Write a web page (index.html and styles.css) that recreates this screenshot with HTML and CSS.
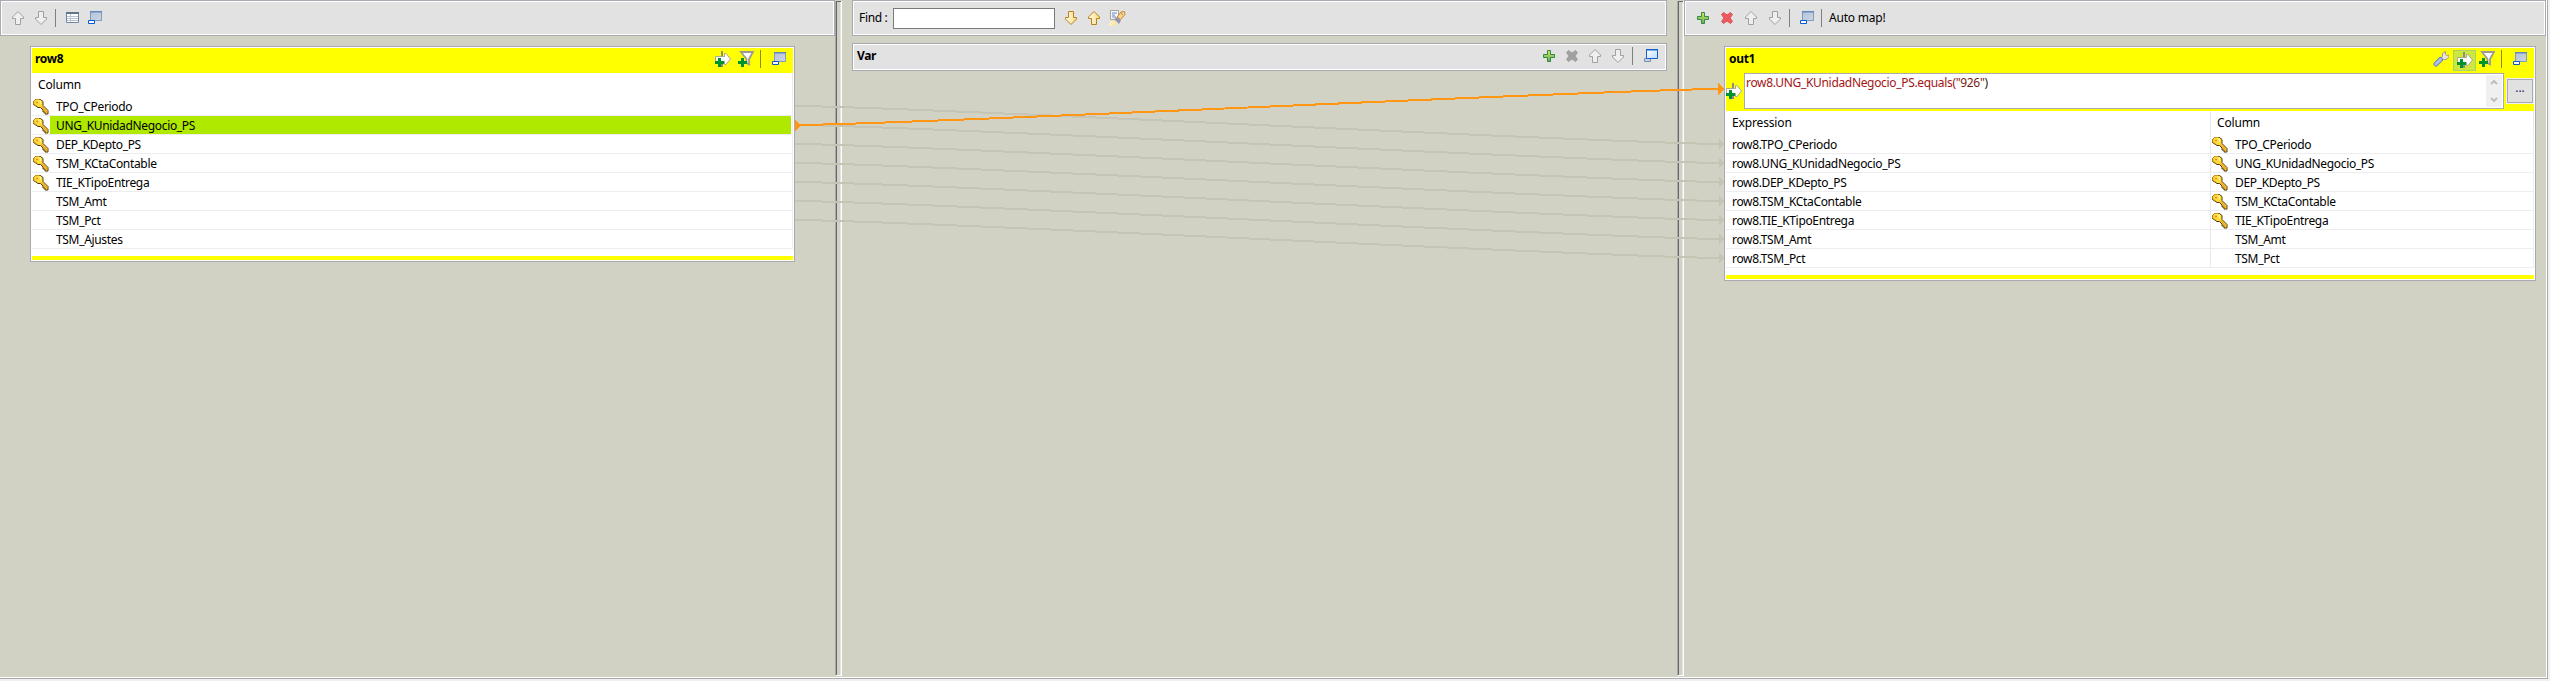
FILE: index.html
```html
<!DOCTYPE html>
<html lang="es">
<head>
<meta charset="utf-8">
<title>Map editor</title>
<link rel="stylesheet" href="styles.css">
</head>
<body>
<svg class="defs" width="0" height="0" aria-hidden="true">
  <defs>
    <linearGradient id="gGold" x1="0" y1="0" x2="1" y2="0"><stop offset="0" stop-color="#fffbe8"/><stop offset="1" stop-color="#f8dc80"/></linearGradient>
    <linearGradient id="gGreen" x1="0" y1="0" x2="0" y2="1"><stop offset="0" stop-color="#d3ea5b"/><stop offset="1" stop-color="#5fae55"/></linearGradient>
    <linearGradient id="gPane" x1="0" y1="0" x2="1" y2="1"><stop offset="0" stop-color="#b0c4de"/><stop offset="1" stop-color="#d0d5dc"/></linearGradient>
    <linearGradient id="gBlue" x1="0" y1="0" x2="1" y2="1"><stop offset="0" stop-color="#ffffff"/><stop offset="1" stop-color="#b9dcff"/></linearGradient>
    <symbol id="up" viewBox="0 0 16 16"><path d="M8 1.500 13.500 7v1.500h-3v6h-5v-6h-3V7z" stroke-linejoin="round"/></symbol>
    <symbol id="down" viewBox="0 0 16 16"><path d="M8 14.500 13.500 9V7.500h-3v-6h-5v6h-3V9z" stroke-linejoin="round"/></symbol>
    <symbol id="grid" viewBox="0 0 16 16"><path d="M2.500 2.500h12v10h-12z" fill="#fff" stroke="#7187a0"/><path d="M2 2h13v2H2z" fill="#5f7389"/><path d="M3 6.500h11M3 8.500h11M3 10.500h11M6.500 4v8" stroke="#b9c4d2" fill="none"/></symbol>
    <symbol id="minwin" viewBox="0 0 16 16"><path d="M3.500 1.500h11v9h-11z" fill="url(#gPane)" stroke="#7f9cc0"/><path d="M3 1h12v1.500H3z" fill="#6488bb"/><path d="M1.500 10.500h6v3h-6z" fill="#fff" stroke="#0b5bd0"/></symbol>
    <symbol id="maxwin" viewBox="0 0 16 16"><path d="M1.500 10.500h6v3h-6z" fill="#c6d2e2" stroke="#7892b5"/><path d="M3.500 1.500h11v9h-11z" fill="url(#gBlue)" stroke="#1461c8"/><path d="M3 1h12v1.500H3z" fill="#1461c8"/></symbol>
    <symbol id="plus" viewBox="0 0 16 16"><path d="M6.500 2.500h3v4h4v3h-4v4h-3v-4h-4v-3h4z" fill="url(#gGreen)" stroke="#35874c"/></symbol>
    <symbol id="cross" viewBox="0 0 16 16"><path d="M2.500 4.500 4.500 2.500 8 5l3.500-2.500 2 2L11 8l2.500 3.500-2 2L8 11l-3.500 2.500-2-2L5 8z" stroke-linejoin="round"/></symbol>
    <symbol id="exprfilter" viewBox="0 0 16 16"><path d="M7 0v16" stroke="#8f8f78" stroke-width="2"/><path d="M.5 5.500h9v-3h1.500L15.500 8 11 13.500H9.500v-3h-9z" fill="#fff" stroke="#aaa88d"/><path d="M3 7h3v3h3v3H6v3H3v-3H0v-3h3z" fill="#00942f"/></symbol>
    <symbol id="funnel" viewBox="0 0 16 16"><path d="M3 1h12L11 8v5.500L8.500 12V8z" fill="#fff" stroke="#9d9b91" stroke-width="1.800"/><path d="M3 7h3v3h3v3H6v3H3v-3H0v-3h3z" fill="#00942f"/></symbol>
    <symbol id="key" viewBox="0 0 16 16"><path d="M2.500.5h5l2.500 2v4l5 5v3.500h-3v-2h-2v-2L7.500 8.500H5L.5 5.500v-3z" fill="#ffdc3c" stroke="#4f3908" stroke-linejoin="round"/><path d="M4 7.200.8 5V2.500L2.500.5h4" fill="none" stroke="#d89a18"/><path d="M8.500 7.500 14 13" stroke="#f2a428" stroke-width="1.500"/><path d="M3 3.500h2M4 2.500v2" stroke="#e88b20"/><path d="M5.500 2h2v3" fill="none" stroke="#fff6a0"/></symbol>
    <symbol id="brush" viewBox="0 0 18 16"><path d="M2.500.5h8v9h-8z" fill="#f6f9ff" stroke="#a6a38e"/><path d="M4 3h5M4 5h3M4 7h4" stroke="#6383c4"/><path d="m9 7 4-5 3.500-.5.5 3-4.500 5z" fill="#f6d48c" stroke="#c8862c"/><path d="m13.500 3.500 1 1" stroke="#555"/><path d="m6 9 3-2 4 3.500-2 3.500z" fill="#9893a8"/><path d="m5 10 4 4-3 1.500H1z" fill="#ffe88c"/><path d="m4 11-3 4M6 12l-3 3.500" stroke="#fffce6"/></symbol>
    <symbol id="wrench" viewBox="0 0 16 16"><path d="M7 7.500 9.500 5.500V2.500L12.500.5v3l1 1 2.500-.5v2L13 8.500h-2.500l-2 2z" fill="#e9e7dd" stroke="#a29d84"/><path d="M3 13 7.500 8.500" stroke="#7188bd" stroke-width="5" stroke-linecap="round"/><path d="M3 13 7.500 8.500" stroke="#a9bfe8" stroke-width="3" stroke-linecap="round"/></symbol>
    <symbol id="arrowin" viewBox="0 0 6 12"><path d="M0 0v12l6-6z"/></symbol>
  </defs>
</svg>

<main class="editor">
  <section class="panel inputs">
    <div class="bar">
      <svg class="ic gray"><use href="#up"/></svg>
      <svg class="ic gray g7"><use href="#down"/></svg>
      <i class="sep g6"></i>
      <svg class="ic g8"><use href="#grid"/></svg>
      <svg class="ic g7"><use href="#minwin"/></svg>
    </div>
    <article class="table">
      <header class="title">
        <h2>row8</h2>
        <svg class="ic"><use href="#exprfilter"/></svg>
        <svg class="ic g7"><use href="#funnel"/></svg>
        <i class="sep olive g6"></i>
        <svg class="ic g10"><use href="#minwin"/></svg>
      </header>
      <div class="head"><span class="name">Column</span></div>
      <div class="rows">
        <div class="row"><svg class="key"><use href="#key"/></svg><span class="col">TPO_CPeriodo</span></div>
        <div class="row selected"><svg class="key"><use href="#key"/></svg><span class="col">UNG_KUnidadNegocio_PS</span></div>
        <div class="row"><svg class="key"><use href="#key"/></svg><span class="col">DEP_KDepto_PS</span></div>
        <div class="row"><svg class="key"><use href="#key"/></svg><span class="col">TSM_KCtaContable</span></div>
        <div class="row"><svg class="key"><use href="#key"/></svg><span class="col">TIE_KTipoEntrega</span></div>
        <div class="row"><svg class="key"></svg><span class="col">TSM_Amt</span></div>
        <div class="row"><svg class="key"></svg><span class="col">TSM_Pct</span></div>
        <div class="row"><svg class="key"></svg><span class="col">TSM_Ajustes</span></div>
      </div>
      <div class="foot"></div>
    </article>
  </section>

  <div class="splitter"></div>

  <section class="panel vars">
    <div class="bar find">
      <label class="label" for="find">Find :</label>
      <input id="find" class="field" type="text">
      <svg class="ic gold g8"><use href="#down"/></svg>
      <svg class="ic gold g7"><use href="#up"/></svg>
      <svg class="ic wide g6"><use href="#brush"/></svg>
    </div>
    <div class="bar var">
      <h2>Var</h2>
      <svg class="ic"><use href="#plus"/></svg>
      <svg class="ic off g7"><use href="#cross"/></svg>
      <svg class="ic gray g7"><use href="#up"/></svg>
      <svg class="ic gray g7"><use href="#down"/></svg>
      <i class="sep g6"></i>
      <svg class="ic g10"><use href="#maxwin"/></svg>
    </div>
  </section>

  <div class="splitter"></div>

  <section class="panel outputs">
    <div class="bar">
      <svg class="ic"><use href="#plus"/></svg>
      <svg class="ic red g8"><use href="#cross"/></svg>
      <svg class="ic gray g8"><use href="#up"/></svg>
      <svg class="ic gray g8"><use href="#down"/></svg>
      <i class="sep g6"></i>
      <svg class="ic g9"><use href="#minwin"/></svg>
      <i class="sep g6"></i>
      <span class="label automap">Auto map!</span>
    </div>
    <article class="table">
      <header class="title">
        <h2>out1</h2>
        <svg class="ic"><use href="#wrench"/></svg>
        <span class="toggle"><svg class="ic"><use href="#exprfilter"/></svg></span>
        <svg class="ic g3"><use href="#funnel"/></svg>
        <i class="sep olive g6"></i>
        <svg class="ic g10"><use href="#minwin"/></svg>
      </header>
      <div class="filter">
        <svg class="ic mark"><use href="#exprfilter"/></svg>
        <div class="expression">
          <span>row8.UNG_KUnidadNegocio_PS.equals(<b class="str">"926"</b><b class="paren">)</b></span>
          <div class="scroll">
            <svg width="8" height="5" viewBox="0 0 8 5"><path d="m1 4 3-3 3 3"/></svg>
            <svg width="8" height="5" viewBox="0 0 8 5"><path d="m1 1 3 3 3-3"/></svg>
          </div>
        </div>
        <button class="more" type="button">...</button>
      </div>
      <div class="head"><span class="expr">Expression</span><span class="name">Column</span></div>
      <div class="rows">
        <div class="row"><span class="expr">row8.TPO_CPeriodo</span><svg class="key"><use href="#key"/></svg><span class="col">TPO_CPeriodo</span></div>
        <div class="row"><span class="expr">row8.UNG_KUnidadNegocio_PS</span><svg class="key"><use href="#key"/></svg><span class="col">UNG_KUnidadNegocio_PS</span></div>
        <div class="row"><span class="expr">row8.DEP_KDepto_PS</span><svg class="key"><use href="#key"/></svg><span class="col">DEP_KDepto_PS</span></div>
        <div class="row"><span class="expr">row8.TSM_KCtaContable</span><svg class="key"><use href="#key"/></svg><span class="col">TSM_KCtaContable</span></div>
        <div class="row"><span class="expr">row8.TIE_KTipoEntrega</span><svg class="key"><use href="#key"/></svg><span class="col">TIE_KTipoEntrega</span></div>
        <div class="row"><span class="expr">row8.TSM_Amt</span><svg class="key"></svg><span class="col">TSM_Amt</span></div>
        <div class="row"><span class="expr">row8.TSM_Pct</span><svg class="key"></svg><span class="col">TSM_Pct</span></div>
      </div>
      <div class="foot"></div>
    </article>
  </section>

  <svg class="links" width="2547" height="300" viewBox="0 0 2547 300">
    <g class="link">
      <path d="M795 106C905 106 1614 144 1724 144"/>
      <path d="M795 125C905 125 1614 163 1724 163"/>
      <path d="M795 144C905 144 1614 182 1724 182"/>
      <path d="M795 163C905 163 1614 201 1724 201"/>
      <path d="M795 182C905 182 1614 220 1724 220"/>
      <path d="M795 201C905 201 1614 239 1724 239"/>
      <path d="M795 220C905 220 1614 258 1724 258"/>
    </g>
    <g class="tips">
      <use href="#arrowin" x="1719" y="138.500" width="5" height="11"/>
      <use href="#arrowin" x="1719" y="157.500" width="5" height="11"/>
      <use href="#arrowin" x="1719" y="176.500" width="5" height="11"/>
      <use href="#arrowin" x="1719" y="195.500" width="5" height="11"/>
      <use href="#arrowin" x="1719" y="214.500" width="5" height="11"/>
      <use href="#arrowin" x="1719" y="233.500" width="5" height="11"/>
      <use href="#arrowin" x="1719" y="252.500" width="5" height="11"/>
    </g>
    <g class="active">
      <path d="M795 125C905 125 1614 89 1720 89"/>
      <path class="tip" d="M795 120v11l5.500-5.500zM1718 83v12l6-6z"/>
    </g>
  </svg>
</main>
</body>
</html>
```

FILE: styles.css
```css
* { box-sizing: border-box; }

body {
  margin: 0;
  background: #f0f0f0;
  color: #000;
  font: 12px/16px "Noto Sans", "Open Sans", sans-serif;
  letter-spacing: -0.33px;
}

h2 { margin: 0; font-size: 12px; font-weight: 700; }
.defs { position: absolute; }

.editor {
  position: relative;
  display: grid;
  grid-template-columns: 835px 7px 835px 7px 862px;
  width: 2548px;
  height: 679px;
  background: #d1d2c3;
  border-right: 1px solid #a9a9ae;
  border-bottom: 1px solid #a9a9ae;
  box-shadow: inset -1px -1px #fff;
}

.panel { display: flex; flex-direction: column; }

.splitter {
  height: 675px;
  margin-top: 1px;
  border-left: 1px solid #a9a9a9;
  border-right: 1px solid #fff;
  border-bottom: 1px solid #fff;
  box-shadow: inset 1px 0 #66676a, inset 0 1px #66676a, inset -1px 0 #e4e4e4;
}

/* Toolbars */
.bar {
  display: flex;
  align-items: center;
  height: 36px;
  padding: 0 8px;
  border: 1px solid #a9a9b2;
  background: #e2e2e2;
  box-shadow: inset 0 0 0 1px #fff;
}
.inputs .bar { padding-left: 9px; }
.vars { padding: 0 10px; }
.find { padding-left: 6px; }
.var { height: 28px; margin-top: 7px; padding: 0 7px 2px 4px; }
.var h2 { flex: 1; }
.outputs .bar { padding-left: 10px; }

.ic { display: block; flex: none; width: 16px; height: 16px; }
.wide { width: 18px; }
.sep { width: 1px; height: 18px; background: #808080; }
.olive { background: #8b8b10; }
.g3 { margin-left: 3px; }
.g6 { margin-left: 6px; }
.g7 { margin-left: 7px; }
.g8 { margin-left: 8px; }
.g9 { margin-left: 9px; }
.g10 { margin-left: 10px; }
.gray { fill: #efefef; stroke: #a0a0a0; }
.gold { fill: url(#gGold); stroke: #b97f20; }
.red { fill: #f0595d; stroke: #d4565a; }
.off { fill: #a0a0a0; stroke: #a0a0a0; }

.label { width: 34px; }
.automap { width: auto; margin-left: 7px; letter-spacing: -0.2px; }
.field {
  width: 162px;
  height: 21px;
  padding: 0 4px;
  border: 1px solid #7a7a7a;
  background: #fff;
}

/* Mapping tables */
.table {
  width: 765px;
  margin: 10px 0 0 30px;
  padding: 1px;
  border: 1px solid #a9a9b2;
  background: #fff;
}
.outputs .table { width: 812px; margin-left: 40px; }

.title {
  display: flex;
  align-items: center;
  height: 25px;
  padding: 0 6px 3px 3px;
  background: #ff0;
}
.title h2 { flex: 1; }
.toggle {
  width: 23px;
  height: 21px;
  margin: 2px 0 0 4px;
  padding: 1px 3px;
  border: 1px solid #a5d46a;
  background: #cde83a;
}

.head, .row { display: flex; }
.head { height: 24px; line-height: 23px; letter-spacing: -0.15px; }
.head .name { flex: 1; padding-left: 6px; border-right: 1px solid #ebebeb; }
.row {
  height: 19px;
  line-height: 20px;
  border-bottom: 1px solid #ededf0;
  border-right: 1px solid #ebf0f8;
}
.key { flex: none; width: 16px; height: 16px; margin: 2px 1px 0; }
.col { flex: 1; height: 18px; padding-left: 6px; margin-right: 1px; }
.selected .col { background: #afe900; }
.foot { height: 11px; border-bottom: 4px solid #ff0; }

.expr { width: 485px; padding-left: 6px; border-right: 1px solid #e6e9f0; }
.row .expr { height: 18px; }

.filter {
  display: flex;
  height: 38px;
  padding-bottom: 2px;
  background: #ff0;
}
.mark { margin: 10px 2px 0 0; }
.expression {
  display: flex;
  justify-content: space-between;
  width: 760px;
  padding: 1px;
  border: 1px solid #a9a9b2;
  background: #fff;
  color: #a31515;
}
.expression b { font-weight: 400; }
.str { color: #7a1c10; }
.paren { color: #222; }
.scroll {
  display: flex;
  flex-direction: column;
  justify-content: space-between;
  align-items: center;
  width: 16px;
  padding: 5px 0;
  background: #f0f0f0;
}
.scroll path { fill: none; stroke: #bdbdbd; stroke-width: 2; }
.more {
  width: 26px;
  height: 24px;
  margin: 6px 0 0 3px;
  padding: 0 0 6px;
  border: 1px solid #a9a9b2;
  outline: 1px solid #f0f0f0;
  background: #e1e1e1;
  color: #26266b;
  font: 12px/14px "Noto Sans", sans-serif;
}

/* Connections drawn across the panels */
.links {
  position: absolute;
  left: 0;
  top: 0;
  pointer-events: none;
  shape-rendering: crispEdges;
}
.link { fill: none; stroke: #c4c5b5; stroke-width: 2; }
.tips { fill: #c4c5b5; }
.active { fill: none; stroke: #ff9614; stroke-width: 2; }
.tip { fill: #ff9614; stroke: none; }
```
